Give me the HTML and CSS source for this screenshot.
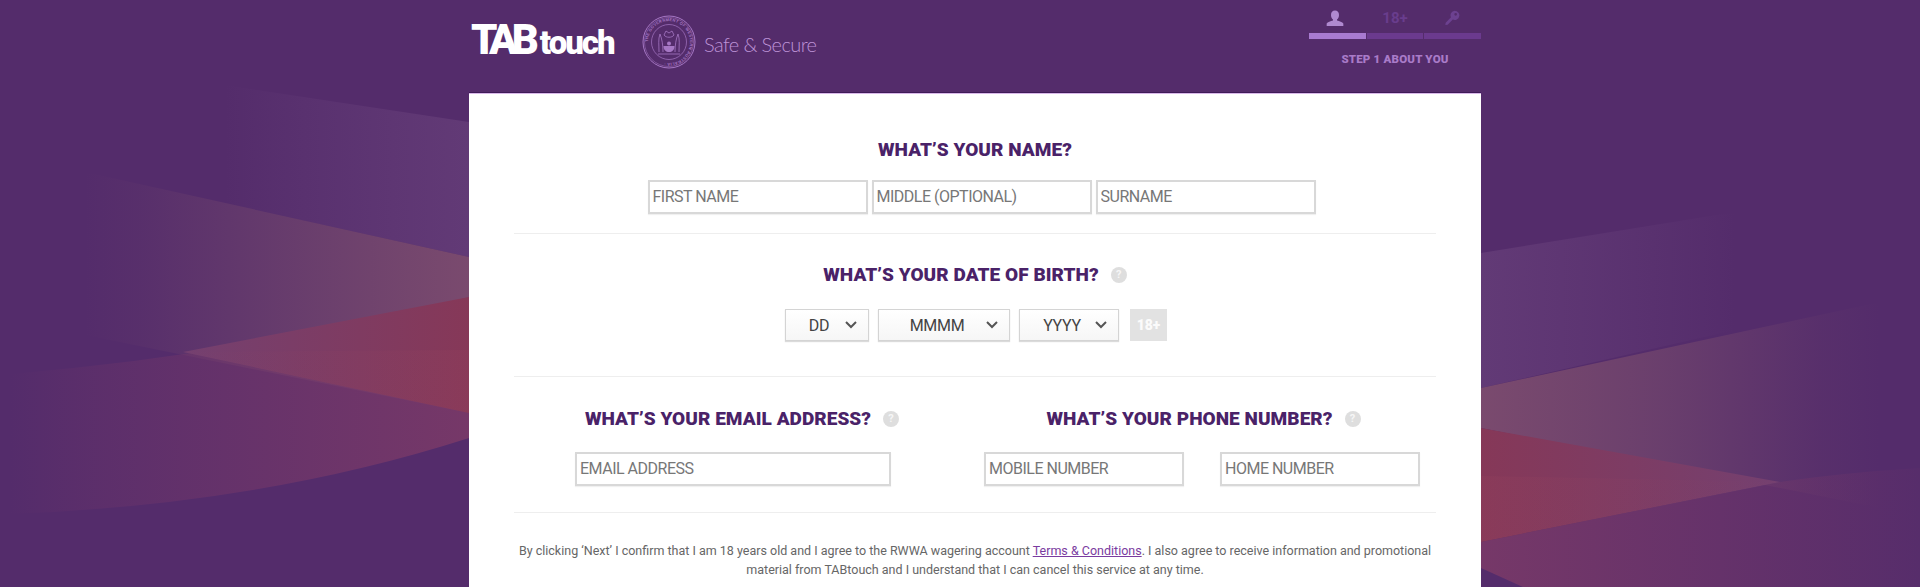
FILE: index.html
```html
<!DOCTYPE html>
<html lang="en">
<head>
<meta charset="utf-8">
<title>TABtouch – About you</title>
<link rel="stylesheet" href="styles.css">
</head>
<body>
<svg class="backdrop" viewBox="0 0 1920 587" width="1920" height="587" aria-hidden="true">
  <defs>
    <linearGradient id="la" gradientUnits="userSpaceOnUse" x1="225" y1="0" x2="469" y2="0"><stop offset="0" stop-color="#643c78" stop-opacity="0"/><stop offset="1" stop-color="#623a76"/></linearGradient>
    <linearGradient id="lb" gradientUnits="userSpaceOnUse" x1="85" y1="0" x2="469" y2="0"><stop offset="0" stop-color="#7c4e6e" stop-opacity="0"/><stop offset=".15" stop-color="#7c4e6e" stop-opacity=".1"/><stop offset=".55" stop-color="#7c4e6e" stop-opacity=".5"/><stop offset="1" stop-color="#7a4a6e"/></linearGradient>
    <linearGradient id="lc" gradientUnits="userSpaceOnUse" x1="10" y1="0" x2="469" y2="0"><stop offset="0" stop-color="#76386a" stop-opacity="0"/><stop offset=".2" stop-color="#76386a" stop-opacity=".25"/><stop offset="1" stop-color="#763868"/></linearGradient>
    <linearGradient id="lr" gradientUnits="userSpaceOnUse" x1="183" y1="0" x2="469" y2="0"><stop offset="0" stop-color="#744070"/><stop offset="1" stop-color="#863858"/></linearGradient>
    <linearGradient id="ra" gradientUnits="userSpaceOnUse" x1="1481" y1="0" x2="1735" y2="0"><stop offset="0" stop-color="#623a76"/><stop offset="1" stop-color="#643c78" stop-opacity="0"/></linearGradient>
    <linearGradient id="rb" gradientUnits="userSpaceOnUse" x1="1481" y1="0" x2="1880" y2="0"><stop offset="0" stop-color="#7a4a6e"/><stop offset=".45" stop-color="#7c4e6e" stop-opacity=".55"/><stop offset=".85" stop-color="#7c4e6e" stop-opacity=".1"/><stop offset="1" stop-color="#7c4e6e" stop-opacity="0"/></linearGradient>
    <linearGradient id="rc" gradientUnits="userSpaceOnUse" x1="1481" y1="0" x2="1960" y2="0"><stop offset="0" stop-color="#763868"/><stop offset="1" stop-color="#76386a" stop-opacity="0"/></linearGradient>
    <linearGradient id="rr" gradientUnits="userSpaceOnUse" x1="1481" y1="0" x2="1780" y2="0"><stop offset="0" stop-color="#863858"/><stop offset="1" stop-color="#744070"/></linearGradient>
    <linearGradient id="lg" gradientUnits="userSpaceOnUse" x1="183" y1="0" x2="469" y2="0"><stop offset="0" stop-color="#a04860" stop-opacity="0"/><stop offset="1" stop-color="#a04860" stop-opacity=".15"/></linearGradient>
    <linearGradient id="rg" gradientUnits="userSpaceOnUse" x1="1481" y1="0" x2="1780" y2="0"><stop offset="0" stop-color="#a04860" stop-opacity=".15"/><stop offset="1" stop-color="#a04860" stop-opacity="0"/></linearGradient>
  </defs>
  <path fill="url(#la)" d="M225 85 L469 122 V257 L225 203 Z"/>
  <path fill="url(#lb)" d="M85 172 L469 257 V413 L85 335 Z"/>
  <path fill="url(#lc)" d="M10 374 Q250 354 469 297 V438 Q260 505 10 514 Z"/>
  <path fill="url(#lr)" d="M183 352 L469 297 V413 Z"/>
  <path fill="url(#lg)" d="M183 352 L469 350 V413 Z"/>
  <path fill="url(#ra)" d="M1481 253 L1735 212 V330 L1481 388 Z"/>
  <path fill="url(#rb)" d="M1481 388 L1880 302 V508 L1481 428 Z"/>
  <path fill="url(#rc)" d="M1481 542 L1780 482 Q1860 470 1960 466 V640 H1640 L1481 568 Z"/>
  <path fill="url(#rr)" d="M1780 482 L1481 428 V542 Z"/>
  <path fill="url(#rg)" d="M1780 482 L1481 476 V542 Z"/>
</svg>

<div class="page">
  <header class="top">
    <div class="brand">
      <div class="logo"><span class="logo-tab">TAB</span><span class="logo-touch">touch</span></div>
      <svg class="seal" viewBox="0 0 54 56" width="54" height="56" aria-hidden="true">
        <defs><path id="sealarc" d="M27 28 m-21 0 a21 21 0 1 1 42 0 a21 21 0 1 1 -42 0"/></defs>
        <g fill="none" stroke="#a677c4">
          <circle cx="27" cy="28" r="26" stroke-width="1"/>
          <circle cx="27" cy="28" r="24.500" stroke-width=".5"/>
          <circle cx="27" cy="28" r="17.500" stroke-width=".7"/>
        </g>
        <text class="seal-text"><textPath href="#sealarc">THE GOVERNMENT OF WESTERN AUSTRALIA ·</textPath></text>
        <g fill="none" stroke="#a677c4" stroke-width=".8">
          <path d="M17 38 C17 31 16 25 18 20 C20 25 21 31 21 38"/>
          <path d="M33 38 C33 31 34 25 36 20 C38 25 37 31 37 38"/>
          <path d="M22 21 L24 17 L27 19 L30 17 L32 21 C30 24 24 24 22 21 Z"/>
          <path d="M16 40 H38"/>
        </g>
        <g fill="#a677c4">
          <path d="M21.500 32 H32.500 C32.500 36 30 38 27 38 C24 38 21.500 36 21.500 32 Z"/>
          <circle cx="27" cy="29.500" r="2"/>
        </g>
      </svg>
      <div class="safe">Safe &amp; Secure</div>
    </div>
    <div class="steps">
      <div class="step-icons">
        <svg class="step-icon step-user" viewBox="0 0 24 20" width="20" height="17" aria-hidden="true"><path fill="#b08ad0" d="M12 0.500c3 0 4.800 2.200 4.800 5.200 0 2.400-1 4.400-2.400 5.500v1.300c2.800.8 6.600 2 7.600 3.500v3H2v-3c1-1.500 4.800-2.700 7.600-3.500v-1.300C8.200 10.100 7.200 8.100 7.200 5.700 7.200 2.700 9 .5 12 .5z"/></svg>
        <span class="step-age">18+</span>
        <svg class="step-icon step-key" viewBox="0 0 24 24" width="16" height="16" aria-hidden="true"><path fill="#6c4190" fill-rule="evenodd" d="M16 1a7 7 0 1 1-2.800 13.400L5.500 22 2 22.500l.5-3.500 8-8A7 7 0 0 1 16 1zm1.500 3.500a2 2 0 1 0 0 4 2 2 0 0 0 0-4z"/></svg>
      </div>
      <div class="bars"><span class="bar bar-on"></span><span class="bar"></span><span class="bar"></span></div>
      <div class="step-label">STEP 1 ABOUT YOU</div>
    </div>
  </header>

  <main class="panel">
    <section class="block">
      <h2 class="title">WHAT’S YOUR NAME?</h2>
      <div class="fields fields-name">
        <input class="field field-name" placeholder="FIRST NAME">
        <input class="field field-name" placeholder="MIDDLE (OPTIONAL)">
        <input class="field field-name" placeholder="SURNAME">
      </div>
    </section>

    <section class="block block-dob">
      <h2 class="title title-help"><span>WHAT’S YOUR DATE OF BIRTH?</span><span class="help">?</span></h2>
      <div class="fields fields-dob">
        <div class="pick pick-d"><span class="pick-text">DD</span><svg class="chev" viewBox="0 0 12 8" width="12" height="8" aria-hidden="true"><path d="M1 1 6 6 11 1" fill="none" stroke="#555" stroke-width="2"/></svg></div>
        <div class="pick pick-m"><span class="pick-text">MMMM</span><svg class="chev" viewBox="0 0 12 8" width="12" height="8" aria-hidden="true"><path d="M1 1 6 6 11 1" fill="none" stroke="#555" stroke-width="2"/></svg></div>
        <div class="pick pick-y"><span class="pick-text">YYYY</span><svg class="chev" viewBox="0 0 12 8" width="12" height="8" aria-hidden="true"><path d="M1 1 6 6 11 1" fill="none" stroke="#555" stroke-width="2"/></svg></div>
        <div class="age">18+</div>
      </div>
    </section>

    <section class="block block-contact">
      <div class="col col-email">
        <h2 class="title title-help title-email"><span>WHAT’S YOUR EMAIL ADDRESS?</span><span class="help">?</span></h2>
        <input class="field field-email" placeholder="EMAIL ADDRESS">
      </div>
      <div class="col col-phone">
        <h2 class="title title-help title-phone"><span>WHAT’S YOUR PHONE NUMBER?</span><span class="help">?</span></h2>
        <div class="phones">
          <input class="field field-phone" placeholder="MOBILE NUMBER">
          <input class="field field-phone" placeholder="HOME NUMBER">
        </div>
      </div>
    </section>

    <p class="legal">By clicking ‘Next’ I confirm that I am 18 years old and I agree to the RWWA wagering account <a href="#">Terms &amp; Conditions</a>. I also agree to receive information and promotional<br>material from TABtouch and I understand that I can cancel this service at any time.</p>
  </main>
</div>
</body>
</html>
```

FILE: styles.css
```css
* { box-sizing: border-box; }

html, body {
  margin: 0;
  height: 587px;
  overflow: hidden;
  background: #542c6b;
  font-family: "Roboto", "Liberation Sans", sans-serif;
}

.backdrop {
  position: absolute;
  left: 0;
  top: 0;
}

.page {
  position: relative;
  width: 1012px;
  margin: 0 0 0 469px;
}

.top {
  display: flex;
  justify-content: space-between;
  height: 93px;
}

.brand {
  display: flex;
  align-items: flex-start;
  padding: 14px 0 0 2px;
}

.logo {
  width: 171px;
  margin-top: 3px;
  color: #fff;
  font-family: "Roboto", sans-serif;
  font-weight: 900;
  line-height: 46px;
  white-space: nowrap;
}

.logo-tab {
  font-size: 42px;
  letter-spacing: -6px;
}

.logo-touch {
  margin-left: 7px;
  font-size: 33px;
  letter-spacing: -2px;
}

.seal { flex: none; }

.seal-text {
  font-family: "Liberation Sans", sans-serif;
  font-size: 4px;
  font-weight: 700;
  letter-spacing: .3px;
  fill: #a677c4;
}

.safe {
  margin: 17px 0 0 8px;
  color: #bd92d6;
  font-family: "Lato", sans-serif;
  font-size: 20px;
  font-weight: 300;
  line-height: 26px;
  letter-spacing: -.6px;
}

.steps {
  width: 172px;
  padding-top: 8px;
}

.step-icons {
  display: grid;
  grid-template-columns: 1fr 1fr 1fr;
  align-items: center;
  justify-items: center;
  height: 20px;
}

.step-user { margin-right: 6px; }

.step-age {
  color: #693d8d;
  font-size: 15px;
  font-weight: 700;
}

.bars {
  display: flex;
  gap: 1px;
  margin-top: 5px;
}

.bar {
  flex: 1;
  height: 6px;
  background: #6b3a8e;
}

.bar-on { background: #a87ad0; }

.step-label {
  margin-top: 13px;
  color: #a97bc8;
  font-size: 11.500px;
  font-weight: 900;
  line-height: 14px;
  letter-spacing: .2px;
  text-align: center;
}

.panel {
  height: 494px;
  padding: 0 45px;
  background: #fff;
  box-shadow: 0 -1px 0 #3f1c58;
  border-top: 1px solid #d9b8ea;
}

.block {
  padding: 44px 0 19px;
  border-bottom: 1px solid #eee;
}

.block-dob { padding: 29px 0 35px; }

.block-contact {
  display: flex;
  padding: 30px 0 26px;
}

.title {
  margin: 0;
  color: #4a2268;
  font-size: 19px;
  font-weight: 900;
  line-height: 24px;
  letter-spacing: .05px;
  text-align: center;
}

.title-help {
  display: flex;
  align-items: center;
  justify-content: center;
  gap: 12px;
}

.title-email { padding-right: 13px; }
.title-phone { padding-left: 4px; }

.help {
  width: 16px;
  height: 16px;
  border-radius: 50%;
  background: #dedede;
  color: #f6f6f6;
  font-size: 11px;
  font-weight: 700;
  line-height: 16px;
  letter-spacing: 0;
  text-align: center;
}

.fields {
  display: flex;
  justify-content: center;
}

.fields-name {
  gap: 4px;
  margin: 18px 0 0 13px;
}

.fields-dob {
  align-items: stretch;
  height: 32px;
  margin: 22px 0 0 2px;
}

.field {
  display: block;
  height: 34px;
  padding: 0 3px 1px;
  border: 2px solid #d8d8d8;
  border-radius: 0;
  outline: 0;
  background: #fff;
  box-shadow: 0 1px 1px rgba(0, 0, 0, .06);
  font-family: "Roboto", sans-serif;
  font-size: 16px;
  letter-spacing: -.5px;
}

.field::placeholder {
  color: #777;
  opacity: 1;
}

.field-name { width: 220px; }
.field-email { width: 316px; margin: 21px 0 0 61px; }
.field-phone { width: 200px; }

.pick {
  display: flex;
  align-items: center;
  border: 1px solid #d4d4d4;
  background: linear-gradient(#fff, #f6f6f6);
  box-shadow: 0 1px 1px rgba(0, 0, 0, .14);
  color: #444;
  font-size: 16px;
  letter-spacing: -.3px;
}

.pick-text {
  flex: 1;
  text-align: center;
}

.pick-d { width: 84px; margin-right: 9px; padding: 0 11px 0 7px; }
.pick-m { width: 132px; margin-right: 9px; padding: 0 11px 0 9px; }
.pick-y { width: 100px; margin-right: 11px; padding: 0 11px 0 9px; }

.chev { flex: none; }

.age {
  width: 37px;
  background: #e2e2e2;
  color: #fbfbfb;
  font-size: 14px;
  font-weight: 900;
  line-height: 32px;
  text-align: center;
}

.col-email { width: 469px; }

.phones {
  display: flex;
  gap: 36px;
  margin: 21px 0 0 1px;
}

.legal {
  margin: 28px 0 0;
  color: #666;
  font-size: 12.500px;
  line-height: 19px;
  text-align: center;
  white-space: nowrap;
}

.legal a { color: #7a3ba0; }
```
